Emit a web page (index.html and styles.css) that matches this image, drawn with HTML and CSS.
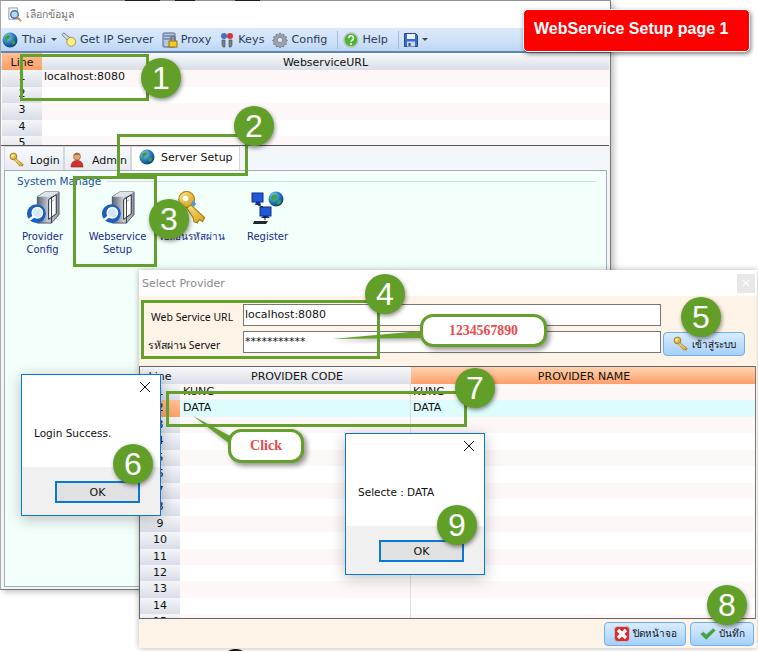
FILE: index.html
```html
<!DOCTYPE html>
<html lang="en">
<head>
<meta charset="utf-8">
<title>WebService Setup page 1</title>
<link rel="stylesheet" href="styles.css">
</head>
<body>
<svg class="defs" width="0" height="0">
  <defs>
    <radialGradient id="gGlobe" cx="35%" cy="30%" r="75%"><stop offset="0" stop-color="#8fd0f5"/><stop offset=".6" stop-color="#1f73b8"/><stop offset="1" stop-color="#0c3f75"/></radialGradient>
    <linearGradient id="gTower" x1="0" x2="1"><stop offset="0" stop-color="#5b6475"/><stop offset=".5" stop-color="#c6cbd4"/><stop offset="1" stop-color="#8f97a5"/></linearGradient>
    <linearGradient id="gKey" x1="0" x2="1" y1="0" y2="1"><stop offset="0" stop-color="#ffe88a"/><stop offset="1" stop-color="#d39a12"/></linearGradient>
    <symbol id="i-globe" viewBox="0 0 16 16"><circle cx="8" cy="8" r="7.5" fill="url(#gGlobe)"/><path d="M3 5c2-2 4-2 5-1s-1 3-2 3-1 2-1 3-2-1-2-5zM10 9c2-1 4 0 3 2s-2 2-3 1 0-2 0-3z" fill="#3f9e3a"/></symbol>
    <symbol id="i-torch" viewBox="0 0 18 18"><path d="M1 3 3 1l8 6-3 3z" fill="#d5d8dd" stroke="#6d7380"/><circle cx="11.5" cy="11" r="5" fill="#fff07a" stroke="#8d8a55"/></symbol>
    <symbol id="i-proxy" viewBox="0 0 16 16"><rect x="1" y="1" width="12" height="14" rx="1" fill="#b9c7dd" stroke="#51648a"/><path d="M2 4h10M2 7h10" stroke="#51648a"/><rect x="7" y="9" width="8" height="6" fill="#f6c927" stroke="#96700c"/><path d="M9 9V6.500a2 2 0 0 1 4 0V9" fill="none" stroke="#6b6f76" stroke-width="1.300"/></symbol>
    <symbol id="i-keys" viewBox="0 0 16 16"><circle cx="5" cy="4" r="3" fill="#4b6fc4"/><circle cx="11" cy="4" r="3" fill="#d9362b"/><path d="M3 8h3v7H4l-1-2zM10 8h3v5l-1 2h-2z" fill="#7a8088" stroke="#44484e" stroke-width=".6"/></symbol>
    <symbol id="i-gear" viewBox="0 0 16 16"><path d="M8 .8l1.400 2 2.300-.8.400 2.400 2.400.4-.8 2.300 2 1.400-2 1.400.8 2.300-2.400.4-.4 2.400-2.300-.8-1.400 2-1.400-2-2.300.8-.4-2.400-2.400-.4.8-2.300-2-1.400 2-1.400-.8-2.300 2.400-.4.400-2.400 2.300.8z" fill="#9aa1ae" stroke="#5f6672" stroke-width=".6"/><circle cx="8" cy="8" r="2.600" fill="#e7eaf0" stroke="#5f6672" stroke-width=".6"/></symbol>
    <symbol id="i-help" viewBox="0 0 16 16"><circle cx="8" cy="8" r="7" fill="#4cb535" stroke="#b9c3b5" stroke-width="1.500"/><path d="M5.800 6.200a2.300 2.300 0 1 1 3.300 2c-.8.400-1.100.8-1.100 1.600" fill="none" stroke="#fff" stroke-width="1.500"/><circle cx="8" cy="12" r="1" fill="#fff"/></symbol>
    <symbol id="i-save" viewBox="0 0 14 14"><path d="M.5.500h11l2 2v11H.500z" fill="#3a6fd0" stroke="#24478f"/><rect x="3" y="1" width="8" height="5" fill="#eef3fb"/><rect x="3" y="8.500" width="8" height="5" fill="#c9d6ef"/><rect x="4.500" y="10" width="2" height="3" fill="#24478f"/></symbol>
    <symbol id="i-search" viewBox="0 0 16 16"><rect x="2" y="1" width="9" height="12" fill="#fff" stroke="#8a94a8"/><circle cx="8" cy="8" r="4" fill="#bcd7f2" stroke="#4a6ea5" stroke-width="1.500"/><path d="M11 11l4 4" stroke="#c7902a" stroke-width="2"/></symbol>
    <symbol id="i-key" viewBox="0 0 18 18"><circle cx="5" cy="5" r="3.800" fill="url(#gKey)" stroke="#9a7310"/><circle cx="4.200" cy="4.200" r="1.100" fill="#fffbe0"/><path d="M7.500 7.500 16 14l-1 2-2-1-1 1-1.500-2L6 9z" fill="url(#gKey)" stroke="#9a7310" stroke-width=".7"/></symbol>
    <symbol id="i-admin" viewBox="0 0 16 16"><circle cx="8" cy="4.500" r="3.500" fill="#e6a36b" stroke="#8b5226" stroke-width=".6"/><path d="M5 3c1-2 5-2 6 0-2-.6-4-.6-6 0z" fill="#7b3c12"/><path d="M2 15c0-4 2-6.500 6-6.500s6 2.500 6 6.500z" fill="#d4312a" stroke="#8c1d17" stroke-width=".6"/></symbol>
    <symbol id="i-server" viewBox="0 0 36 36"><path d="M12 6 20 1h15v24l-8 9H12z" fill="url(#gTower)" stroke="#333c4d" stroke-width=".8"/><path d="M20 1h15l-8 5H12z" fill="#dfe3ea"/><path d="M24 9l8-5v20l-8 6z" fill="#fff" stroke="#1a1f2a"/><path d="M26 12l4-3" stroke="#999"/><path d="M27 6v28" stroke="#30384a"/><circle cx="11" cy="24" r="10" fill="#1a5fc0"/><circle cx="12" cy="23" r="5.500" fill="#d5e8fa" stroke="#fff" stroke-width="1.500"/><path d="M8 27 3 31" stroke="#fff" stroke-width="2.500"/></symbol>
    <symbol id="i-bigkey" viewBox="0 0 30 34"><circle cx="9" cy="9" r="7.500" fill="url(#gKey)" stroke="#a67b10"/><circle cx="8" cy="8" r="2.600" fill="#fff"/><path d="M13 14 26 26l-2 4-3-2-2 3-3-1-1-4-6-9z" fill="url(#gKey)" stroke="#a67b10"/><path d="M15 10l3 3-2 3-3-3z" fill="#4a9bd8"/></symbol>
    <symbol id="i-register" viewBox="0 0 34 34"><circle cx="25" cy="8" r="7.500" fill="url(#gGlobe)"/><path d="M20 6c2-3 5-3 6-1s-2 4-3 4-2 3-3-3zM27 10c2-1 4-1 3 1s-3 3-4 2 0-2 1-3z" fill="#3aa63e"/><rect x="1" y="2" width="11" height="9" fill="#2257d6" stroke="#10308a"/><path d="M5 11h4l1 3H4z" fill="#10308a"/><rect x="9" y="16" width="11" height="9" fill="#2257d6" stroke="#10308a"/><path d="M12 25h5l2 2H10z" fill="#10308a"/><path d="M3 30h14l-2 3H2z" fill="#23262e"/><path d="M14 25v4M7 14l5 2" stroke="#111"/></symbol>
    <symbol id="i-close" viewBox="0 0 16 16"><rect x=".5" y=".5" width="15" height="15" rx="3" fill="#dc2d2d" stroke="#b9c7dd"/><path d="M4 4l8 8M12 4l-8 8" stroke="#fff" stroke-width="3.200"/></symbol>
    <symbol id="i-check" viewBox="0 0 18 14"><path d="M1 7l3-2 3 3 8-7 2 2L7 13z" fill="#41ab2f" stroke="#2c7d1f" stroke-width=".6"/></symbol>
  </defs>
</svg>

<main class="stage">
  <div class="topedge"></div>

  <section class="win win-main">
    <header class="win-title">
      <svg class="ic15"><use href="#i-search"/></svg>
      <span class="win-title-text">เลือกข้อมูล</span>
    </header>
    <nav class="toolbar">
      <span class="tb-item tb-lang"><svg class="ic16"><use href="#i-globe"/></svg>Thai<i class="caret"></i></span>
      <span class="tb-item"><svg class="ic16"><use href="#i-torch"/></svg>Get IP Server</span>
      <span class="tb-item"><svg class="ic16"><use href="#i-proxy"/></svg>Proxy</span>
      <span class="tb-item"><svg class="ic16"><use href="#i-keys"/></svg>Keys</span>
      <span class="tb-item"><svg class="ic16"><use href="#i-gear"/></svg>Config</span>
      <i class="tb-sep"></i>
      <span class="tb-item"><svg class="ic16"><use href="#i-help"/></svg>Help</span>
      <i class="tb-sep"></i>
      <span class="tb-item"><svg class="ic14"><use href="#i-save"/></svg><i class="caret"></i></span>
    </nav>
    <div class="url-grid">
      <div class="url-head"><span class="line-head">Line</span><span class="url-title">WebserviceURL</span></div>
      <div class="url-row alt"><span class="num">1</span><span class="cell">localhost:8080</span></div>
      <div class="url-row"><span class="num">2</span><span class="cell"></span></div>
      <div class="url-row alt"><span class="num">3</span><span class="cell"></span></div>
      <div class="url-row"><span class="num">4</span><span class="cell"></span></div>
      <div class="url-row alt"><span class="num">5</span><span class="cell"></span></div>
    </div>
    <div class="tabs">
      <span class="tab tab-login"><svg class="ic16"><use href="#i-key"/></svg>Login</span>
      <span class="tab tab-admin"><svg class="ic16"><use href="#i-admin"/></svg>Admin</span>
      <span class="tab tab-active"><svg class="ic16"><use href="#i-globe"/></svg>Server Setup</span>
    </div>
    <div class="panel">
      <div class="group-title"><span>System Manage</span><i></i></div>
      <div class="launchers">
        <div class="launcher"><svg class="ic-launch"><use href="#i-server"/></svg><span>Provider<br>Config</span></div>
        <div class="launcher"><svg class="ic-launch"><use href="#i-server"/></svg><span>Webservice<br>Setup</span></div>
        <div class="launcher"><svg class="ic-launch"><use href="#i-bigkey"/></svg><span>เปลี่ยนรหัสผ่าน</span></div>
        <div class="launcher"><svg class="ic-launch"><use href="#i-register"/></svg><span>Register</span></div>
      </div>
    </div>
  </section>

  <section class="win win-provider">
    <header class="prov-title"><span>Select Provider</span><b class="prov-x">×</b></header>
    <div class="prov-form">
      <div class="prov-fields">
        <label class="prov-field"><span class="prov-label lab-url">Web Service URL</span><span class="input">localhost:8080</span></label>
        <label class="prov-field"><span class="prov-label lab-pass">รหัสผ่าน Server</span><span class="input">***********</span></label>
      </div>
      <button class="btn btn-login"><svg class="ic16"><use href="#i-key"/></svg>เข้าสู่ระบบ</button>
    </div>
    <div class="prov-grid">
      <div class="pg-row pg-head"><span class="pg-num">Line</span><span class="pg-c1">PROVIDER CODE</span><span class="pg-c2">PROVIDER NAME</span></div>
      <div class="pg-row alt"><span class="pg-num">1</span><span class="pg-c1">KUNG</span><span class="pg-c2">KUNG</span></div>
      <div class="pg-row sel"><span class="pg-num">2</span><span class="pg-c1">DATA</span><span class="pg-c2">DATA</span></div>
      <div class="pg-row alt"><span class="pg-num">3</span><span class="pg-c1"></span><span class="pg-c2"></span></div>
      <div class="pg-row"><span class="pg-num">4</span><span class="pg-c1"></span><span class="pg-c2"></span></div>
      <div class="pg-row alt"><span class="pg-num">5</span><span class="pg-c1"></span><span class="pg-c2"></span></div>
      <div class="pg-row"><span class="pg-num">6</span><span class="pg-c1"></span><span class="pg-c2"></span></div>
      <div class="pg-row alt"><span class="pg-num">7</span><span class="pg-c1"></span><span class="pg-c2"></span></div>
      <div class="pg-row"><span class="pg-num">8</span><span class="pg-c1"></span><span class="pg-c2"></span></div>
      <div class="pg-row alt"><span class="pg-num">9</span><span class="pg-c1"></span><span class="pg-c2"></span></div>
      <div class="pg-row"><span class="pg-num">10</span><span class="pg-c1"></span><span class="pg-c2"></span></div>
      <div class="pg-row alt"><span class="pg-num">11</span><span class="pg-c1"></span><span class="pg-c2"></span></div>
      <div class="pg-row"><span class="pg-num">12</span><span class="pg-c1"></span><span class="pg-c2"></span></div>
      <div class="pg-row alt"><span class="pg-num">13</span><span class="pg-c1"></span><span class="pg-c2"></span></div>
      <div class="pg-row"><span class="pg-num">14</span><span class="pg-c1"></span><span class="pg-c2"></span></div>
      <div class="pg-row alt"><span class="pg-num">15</span><span class="pg-c1"></span><span class="pg-c2"></span></div>
    </div>
    <footer class="prov-foot">
      <button class="btn btn-close"><svg class="ic16"><use href="#i-close"/></svg>ปิดหน้าจอ</button>
      <button class="btn btn-save"><svg class="ic16"><use href="#i-check"/></svg>บันทึก</button>
    </footer>
  </section>

  <section class="msg msg-login">
    <div class="msg-x"><svg width="12" height="12" viewBox="0 0 12 12"><path d="M1 1l10 10M11 1 1 11" stroke="#111" stroke-width="1"/></svg></div>
    <p class="msg-text">Login Success.</p>
    <div class="msg-foot"><span class="msg-ok">OK</span></div>
  </section>
  <section class="msg msg-select">
    <div class="msg-x"><svg width="12" height="12" viewBox="0 0 12 12"><path d="M1 1l10 10M11 1 1 11" stroke="#111" stroke-width="1"/></svg></div>
    <p class="msg-text">Selecte : DATA</p>
    <div class="msg-foot"><span class="msg-ok">OK</span></div>
  </section>

  <svg class="pointers" width="758" height="651">
    <path d="M332 339 421 331v7z" fill="#659f2c"/>
    <path d="M193 416 230 436v8z" fill="#659f2c"/>
  </svg>

  <div class="box box1"></div>
  <div class="box box2"></div>
  <div class="box box3"></div>
  <div class="box box4"></div>
  <div class="box box7"></div>

  <div class="callout call-pass">1234567890</div>
  <div class="callout call-click">Click</div>

  <b class="step s1">1</b>
  <b class="step s2">2</b>
  <b class="step s3">3</b>
  <b class="step s4">4</b>
  <b class="step s5">5</b>
  <b class="step s6">6</b>
  <b class="step s7">7</b>
  <b class="step s8">8</b>
  <b class="step s9">9</b>

  <div class="banner">WebService Setup page 1</div>
  <div class="blob"></div>
</main>
</body>
</html>
```
FILE: styles.css
```css
* { box-sizing: border-box; }
html, body { margin: 0; padding: 0; background: #fff; }
body { font-family: "DejaVu Sans", "Noto Sans", sans-serif; font-size: 11px; color: #111; }
.defs { position: absolute; }
.stage { position: relative; width: 758px; height: 651px; overflow: hidden; }
.topedge { position: absolute; left: 0; top: 0; width: 611px; height: 1px; background: linear-gradient(90deg, #999 125px, #222 125px, #222 160px, #999 160px, #999 175px, #222 175px, #222 195px, #999 195px, #999 235px, #222 235px, #222 260px, #999 260px); }
.blob { position: absolute; left: 228px; top: 649px; width: 15px; height: 6px; border-radius: 50%; background: #111; }
i { font-style: normal; }
svg { display: block; flex: none; }
.ic14 { width: 14px; height: 14px; }
.ic15 { width: 15px; height: 15px; }
.ic16 { width: 16px; height: 16px; }
.ic-launch { width: 34px; height: 36px; }

/* windows */
.win { position: absolute; display: flex; flex-direction: column; }
.win-main { left: 0; top: 1px; width: 611px; height: 589px; background: #f2f6fb; border-right: 1px solid #777; border-bottom: 1px solid #777; border-left: 1px solid #aaa; box-shadow: 3px 2px 6px rgba(0,0,0,.25); }
.win-title { height: 27px; flex: none; display: flex; align-items: center; gap: 4px; padding-left: 6px; background: #fff; }
.win-title-text { color: #777; font-size: 10.500px; }
.toolbar { height: 25px; flex: none; display: flex; align-items: center; padding-left: 1px; background: linear-gradient(#dce9fb, #cfe2f9 55%, #bcd5f4); border-bottom: 2px solid #5f87ad; color: #2b3a55; font-size: 11.200px; }
.tb-item { display: flex; align-items: center; gap: 3px; margin-right: 8px; }
.tb-lang { gap: 4px; margin-right: 4px; }
.tb-sep { width: 1px; height: 18px; background: #a5bcd6; margin: 0 5px 0 2px; }
.caret { width: 0; height: 0; border: 3px solid transparent; border-top-color: #445; border-bottom: 0; margin-left: 1px; }

.url-grid { height: 93px; flex: none; overflow: hidden; background: #fff; border-bottom: 1px solid #555; margin-right: 1px; }
.url-head { height: 17px; display: flex; background: linear-gradient(#f8f9fb, #dadee6); text-align: center; line-height: 19px; }
.line-head { width: 40px; margin-left: 1px; background: linear-gradient(#ffc095, #ff9e68); }
.url-title { flex: 1; }
.url-row { height: 16.500px; display: flex; line-height: 14px; }
.url-row.alt { background: #fdf8f7; }
.num { width: 40px; margin-left: 1px; text-align: center; background: linear-gradient(#f4f5f8, #d9dde6); }
.cell { flex: 1; padding-left: 2px; }

.tabs { height: 24px; flex: none; display: flex; align-items: stretch; padding-left: 3px; }
.tab { display: flex; align-items: center; gap: 5px; padding: 3px 5px 0 4px; background: linear-gradient(#f7f9fc, #e7ebf1); border: 1px solid #d4d8de; border-bottom: 0; }
.tab-login { width: 60px; }
.tab-admin { width: 67px; gap: 7px; }
.tab-active { width: 109px; gap: 6px; padding: 0 0 3px 7px; background: #fff; }

.panel { flex: 1; margin: 0 3px 2px 3px; background: #f3fffb; border: 1px solid #aab; padding-top: 4px; }
.group-title { display: flex; align-items: center; gap: 6px; padding-left: 12px; color: #1f4fa0; font-size: 10.500px; }
.group-title i { flex: 1; height: 1px; background: #cfe0e8; margin-right: 10px; }
.launchers { display: flex; padding-top: 3px; }
.launcher { width: 75px; display: flex; flex-direction: column; align-items: center; text-align: center; color: #1a2a8c; font-size: 10px; line-height: 13px; gap: 4px; }

/* provider */
.win-provider { left: 139px; top: 270px; width: 618px; height: 378px; background: #fdf3e6; box-shadow: 0 0 6px rgba(0,0,0,.3); }
.prov-title { height: 26px; flex: none; display: flex; align-items: center; justify-content: space-between; padding: 0 2px 0 3px; background: #fff; color: #8a8a8a; font-size: 11px; }
.prov-x { width: 18px; height: 19px; background: #e8e8e8; color: #fff; font-size: 13px; font-weight: normal; text-align: center; line-height: 18px; }
.prov-form { height: 70px; flex: none; display: flex; align-items: flex-end; gap: 2px; padding: 0 0 11px 0; }
.prov-fields { display: flex; flex-direction: column; gap: 5px; padding-bottom: 2px; }
.prov-field { display: flex; align-items: center; height: 22px; }
.prov-label { width: 104px; font-family: "Noto Sans", sans-serif; font-size: 10.500px; white-space: nowrap; }
.lab-url { padding: 4px 0 0 12px; }
.lab-pass { padding: 7px 0 0 9px; }
.input { width: 418px; height: 22px; background: #fff; border: 1px solid #777; padding-left: 1px; font-size: 11px; line-height: 20px; }
.btn { display: flex; align-items: center; justify-content: center; gap: 3px; height: 24px; padding: 0; border: 1px solid #6fb0ee; border-radius: 4px; background: linear-gradient(#d9ecff, #a5d0fa); font: inherit; font-size: 10px; color: #111; }
.btn-login { width: 82px; margin-bottom: -1px; }
.prov-grid { height: 253px; flex: none; overflow: hidden; background: #fff; border: 1px solid #666; border-right-color: #777; margin-right: 1px; }
.pg-row { height: 16.460px; display: flex; text-align: center; line-height: 16px; white-space: nowrap; }
.pg-row.alt { background: #fdf8f7; }
.pg-row.sel { background: #dffcfd; }
.pg-num { width: 40px; flex: none; background: linear-gradient(#f4f5f8, #d9dde6); }
.pg-row.sel .pg-num { background: linear-gradient(#ffc095, #ff9e68); }
.pg-c1 { width: 231px; flex: none; text-align: left; padding-left: 3px; border-right: 1px solid #ddd; }
.pg-c2 { flex: 1; text-align: left; padding-left: 2px; }
.pg-head { height: 17px; background: linear-gradient(#f8f9fb, #dadee6); line-height: 19px; }
.pg-head .pg-num { background: none; }
.pg-head .pg-c1 { text-align: center; border-right: 0; }
.pg-head .pg-c2 { text-align: center; background: linear-gradient(#ffd3b0, #ff9f68); }
.prov-foot { flex: 1; display: flex; justify-content: flex-end; align-items: center; gap: 4px; padding-right: 3px; }
.btn-close { width: 82px; }
.btn-save { width: 64px; }

/* message boxes */
.msg { position: absolute; width: 140px; height: 142px; display: flex; flex-direction: column; background: #fff; border: 1px solid #0a78d6; box-shadow: 0 3px 14px rgba(0,0,0,.25); }
.msg-login { left: 21px; top: 374px; }
.msg-select { left: 345px; top: 433px; }
.msg-x { height: 32px; flex: none; display: flex; justify-content: flex-end; padding: 6px 9px 0 0; }
.msg-text { margin: 0; flex: 1; padding: 20px 0 0 12px; font-size: 10.500px; }
.msg-foot { height: 48px; flex: none; background: #f0f0f0; padding: 14px 20px 0 33px; }
.msg-ok { display: block; height: 22px; background: #e1e1e1; border: 2px solid #0a78d6; text-align: center; line-height: 19px; font-size: 11px; }

/* annotations */
.pointers { position: absolute; left: 0; top: 0; filter: drop-shadow(2px 2px 2px rgba(0,0,0,.35)); pointer-events: none; }
.box { position: absolute; border: 3px solid #659f2c; }
.box1 { left: 20px; top: 54px; width: 129px; height: 47px; }
.box2 { left: 117px; top: 134px; width: 131px; height: 42px; }
.box3 { left: 73px; top: 176px; width: 84px; height: 91px; }
.box4 { left: 141px; top: 300px; width: 239px; height: 59px; }
.box7 { left: 166px; top: 391px; width: 301px; height: 36px; }
.step { position: absolute; width: 40px; height: 40px; border-radius: 50%; background: #619f28; color: #fff; font: 32px/40px "Liberation Sans", sans-serif; text-align: center; box-shadow: 1px 2px 4px rgba(0,0,0,.45); }
.s1 { left: 141px; top: 58px; }
.s2 { left: 234px; top: 106px; }
.s3 { left: 149px; top: 199px; }
.s4 { left: 365px; top: 274px; }
.s5 { left: 681px; top: 297px; }
.s6 { left: 113px; top: 444px; }
.s7 { left: 455px; top: 368px; }
.s8 { left: 707px; top: 585px; }
.s9 { left: 437px; top: 505px; }
.callout { position: absolute; display: flex; align-items: center; justify-content: center; background: #fff; border: 3px solid #659f2c; border-radius: 13px; color: #e94b4b; font: bold 13.800px "Liberation Serif", serif; box-shadow: 3px 3px 5px rgba(0,0,0,.4); }
.call-pass { left: 420px; top: 314px; width: 127px; height: 33px; padding-top: 1px; }
.call-click { left: 228px; top: 429px; width: 76px; height: 34px; font-size: 14px; }
.banner { position: absolute; left: 523px; top: 9px; width: 227px; height: 43px; background: #f00; border: 1px solid #fff; border-radius: 5px; box-shadow: 1px 2px 4px rgba(0,0,0,.5); color: #fff; font: bold 16px/38px "Liberation Sans", sans-serif; padding-left: 10px; }
```
